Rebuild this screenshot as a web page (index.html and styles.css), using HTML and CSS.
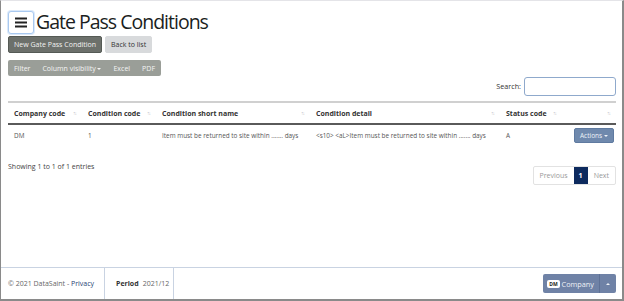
FILE: index.html
```html
<!DOCTYPE html>
<html>
    <head>
        <meta charset="utf-8">
        <title>Gate Pass Conditions</title>
        <link rel="stylesheet" href="styles.css">
    </head>
    <body>
        <div class="frame">
            <main class="content">
                <div class="title-row">
                    <button class="menu-btn" type="button">
                        <svg width="12" height="11" viewBox="0 0 12 11">
                            <rect x="0" y="0.5" width="12" height="2" fill="#222"/>
                            <rect x="0" y="4.5" width="12" height="2" fill="#222"/>
                            <rect x="0" y="8.5" width="12" height="2" fill="#222"/>
                        </svg>
                    </button>
                    <h1>Gate Pass Conditions</h1>
                </div>

                <div class="page-actions">
                    <button class="btn btn-dark" type="button">New Gate Pass Condition</button>
                    <button class="btn btn-light" type="button">Back to list</button>
                </div>

                <div class="dt-buttons">
                    <button type="button">Filter</button>
                    <button type="button">Column visibility <span class="caret"></span></button>
                    <button type="button">Excel</button>
                    <button type="button">PDF</button>
                </div>

                <div class="search-row">
                    <label>Search: <input type="search"></label>
                </div>

                <table class="grid">
                    <thead>
                        <tr>
                            <th class="c1">Company code<i class="sort">↑↓</i></th>
                            <th class="c2">Condition code<i class="sort">↑↓</i></th>
                            <th class="c3">Condition short name<i class="sort">↑↓</i></th>
                            <th class="c4">Condition detail<i class="sort">↑↓</i></th>
                            <th class="c5">Status code<i class="sort">↑↓</i></th>
                            <th class="c6"><i class="sort">↑↓</i></th>
                        </tr>
                    </thead>
                    <tbody>
                        <tr>
                            <td>DM</td>
                            <td>1</td>
                            <td>Item must be returned to site within ....... days</td>
                            <td>&lt;s10&gt; &lt;aL&gt;Item must be returned to site within ....... days</td>
                            <td>A</td>
                            <td><button class="btn-actions" type="button">Actions <span class="caret"></span></button></td>
                        </tr>
                    </tbody>
                </table>

                <div class="table-foot">
                    <span class="info">Showing 1 to 1 of 1 entries</span>
                    <ul class="pager">
                        <li class="disabled">Previous</li>
                        <li class="active">1</li>
                        <li class="disabled">Next</li>
                    </ul>
                </div>
            </main>

            <footer class="footer">
                <div class="foot-cell copy"><span>© 2021 DataSaint - <a href="#">Privacy</a></span></div>
                <div class="foot-cell period"><b>Period</b> 2021/12</div>
                <div class="foot-fill"></div>
                <div class="company-btn">
                    <span class="company-main"><span class="badge">DM</span> Company</span>
                    <span class="company-toggle"><span class="caret-up"></span></span>
                </div>
            </footer>
        </div>
    </body>
</html>
```

FILE: styles.css
```css
html, body {
    margin: 0;
    padding: 0;
    height: 100%;
}
body {
    background: #fff;
    font-family: "Open Sans", "Noto Sans", sans-serif;
    color: #212529;
    font-size: 7px;
}
.frame {
    box-sizing: border-box;
    width: 624px;
    height: 301px;
    border-top: 1px solid #e4e4e8;
    border-left: 1px solid #8a8a8a;
    border-right: 2px solid #8a8a8a;
    border-bottom: 2px solid #8a8a8a;
    display: flex;
    flex-direction: column;
}
.content {
    flex: 1;
    padding: 9px 6px 0 7px;
}
button {
    font-family: inherit;
    cursor: pointer;
}

/* title */
.title-row {
    display: flex;
    align-items: center;
    gap: 2px;
    height: 24px;
}
.menu-btn {
    width: 26px;
    height: 23px;
    padding: 0;
    border: 1px solid #a9c9f0;
    border-radius: 3px;
    background: #fff;
    display: flex;
    align-items: center;
    justify-content: center;
    box-shadow: 0 0 0 1px #dbe9fa;
}
h1 {
    margin: 0;
    font-size: 19.5px;
    font-weight: 400;
    color: #1b1e21;
    letter-spacing: -1px;
    line-height: 24px;
}

/* page buttons */
.page-actions {
    display: flex;
    gap: 3px;
    margin-top: 2px;
}
.btn {
    height: 17px;
    padding: 0 5px;
    font-size: 7px;
    border-radius: 2px;
    border: 1px solid transparent;
}
.btn-dark {
    background: #6c706b;
    border-color: #555a55;
    color: #f2f2f2;
}
.btn-light {
    background: #d8dadc;
    border-color: #d8dadc;
    color: #333;
}

.dt-buttons {
    display: inline-flex;
    margin-top: 7px;
    background: #9a9e98;
    border-radius: 2px;
    height: 16px;
}
.dt-buttons button {
    background: transparent;
    border: 0;
    color: #f4f4f4;
    font-size: 7px;
    padding: 0 6px;
}
.caret {
    display: inline-block;
    width: 0;
    height: 0;
    border-left: 2.5px solid transparent;
    border-right: 2.5px solid transparent;
    border-top: 2.5px solid currentColor;
    vertical-align: 1px;
}

.search-row {
    display: flex;
    justify-content: flex-end;
    height: 18px;
    margin-top: 1px;
}
.search-row label {
    display: flex;
    align-items: center;
    gap: 3px;
    font-size: 7.2px;
    color: #333;
}
.search-row input {
    box-sizing: border-box;
    width: 92px;
    height: 19px;
    border: 1px solid #8fa9cc;
    border-radius: 3px;
    margin: 0;
}

/* table */
.grid {
    width: 100%;
    border-collapse: collapse;
    margin-top: 6px;
    border-top: 2px solid #d0d0d0;
}
.grid th {
    position: relative;
    text-align: left;
    font-weight: 700;
    color: #333;
    height: 20px;
    padding: 0 0 0 6px;
    border-bottom: 2px solid #5a5a5a;
    font-size: 7px;
}
.grid td {
    height: 20px;
    padding: 0 0 0 6px;
    color: #555;
    font-size: 6.4px;
}
.sort {
    position: absolute;
    right: 6px;
    top: 7px;
    font-style: normal;
    font-weight: 400;
    font-size: 5px;
    color: #bdbdbd;
    letter-spacing: -1px;
}
.c1 { width: 68px; }
.c2 { width: 68px; }
.c3 { width: 148px; }
.c4 { width: 184px; }
.c5 { width: 56px; }
.btn-actions {
    margin-left: 6px;
    height: 15px;
    padding: 0 5px;
    background: #6f89ad;
    border: 1px solid #5f7aa0;
    border-radius: 2px;
    color: #eef2f8;
    font-size: 6.5px;
}

.table-foot {
    display: flex;
    justify-content: space-between;
    align-items: flex-start;
    margin-top: 16px;
}
.info {
    color: #444;
    font-size: 7px;
    padding-top: 1px;
}
.pager {
    display: flex;
    list-style: none;
    margin: 5px 0 0;
    padding: 0;
    border: 1px solid #e2e2e2;
    border-radius: 2px;
    height: 17px;
}
.pager li {
    display: flex;
    align-items: center;
    padding: 0 6px;
    font-size: 7px;
    color: #999;
}
.pager li.active {
    background: #0d2a5e;
    color: #fff;
    font-weight: 700;
    padding: 0 5px;
}

/* footer */
.footer {
    display: flex;
    align-items: stretch;
    height: 31px;
    border-top: 1px solid #c9d3e2;
    font-size: 7px;
    color: #666;
}
.foot-cell {
    display: flex;
    align-items: center;
    border-right: 1px solid #c9d3e2;
}
.copy {
    width: 96px;
    padding-left: 7px;
}
.copy a {
    color: #1f3f75;
    text-decoration: none;
}
.period {
    width: 57px;
    padding-left: 11px;
    gap: 4px;
}
.period b {
    color: #333;
}
.foot-fill {
    flex: 1;
}
.company-btn {
    align-self: center;
    display: flex;
    height: 19px;
    margin-right: 6px;
    background: #6f82a6;
    border-radius: 2px;
    color: #eef1f6;
    font-size: 7.3px;
}
.company-main {
    display: flex;
    align-items: center;
    gap: 2px;
    padding: 0 5px 0 4px;
    border-right: 1px solid #5e7196;
}
.badge {
    background: #fff;
    color: #1b1e21;
    font-size: 5px;
    font-weight: 700;
    padding: 1px 2px;
    border-radius: 2px;
}
.company-toggle {
    display: flex;
    align-items: center;
    padding: 0 6px;
}
.caret-up {
    width: 0;
    height: 0;
    border-left: 2.5px solid transparent;
    border-right: 2.5px solid transparent;
    border-bottom: 2.5px solid currentColor;
}
```
